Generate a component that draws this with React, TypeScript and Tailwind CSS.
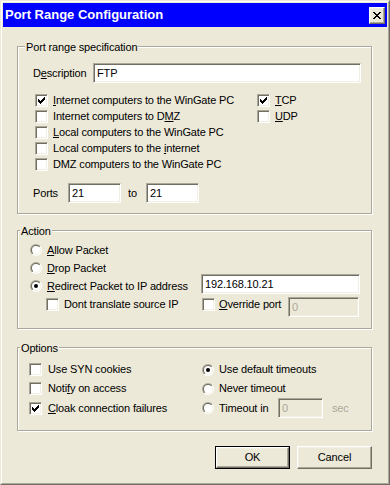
import { useId, type ReactNode } from 'react';

const sunken =
  'border border-t-[#ACA899] border-l-[#ACA899] border-b-white border-r-white shadow-[inset_1px_1px_0_#716F64,inset_-1px_-1px_0_#F1EFE2]';
const raised =
  'border border-t-white border-l-white border-r-[#716F64] border-b-[#716F64] shadow-[inset_-1px_-1px_0_#ACA899,inset_1px_1px_0_#F1EFE2]';

function Check({ checked }: { checked?: boolean }) {
  // classic 7x7 tick
  const cols = [2, 3, 4, 3, 2, 1, 0];
  return (
    <div className={`w-[13px] h-[13px] shrink-0 bg-white flex items-center justify-center ${sunken}`}>
      {checked && (
        <svg width="7" height="7" viewBox="0 0 7 7" shapeRendering="crispEdges">
          {cols.map((y, x) => (
            <rect key={x} x={x} y={y} width="1" height="3" fill="#000" />
          ))}
        </svg>
      )}
    </div>
  );
}

function Radio({ checked }: { checked?: boolean }) {
  const id = useId();
  return (
    <svg width="12" height="12" viewBox="0 0 12 12" className="shrink-0">
      <defs>
        <linearGradient id={`${id}o`} x1="0" y1="0" x2="1" y2="1">
          <stop offset="0.5" stopColor="#ACA899" />
          <stop offset="0.5" stopColor="#fff" />
        </linearGradient>
        <linearGradient id={`${id}i`} x1="0" y1="0" x2="1" y2="1">
          <stop offset="0.5" stopColor="#716F64" />
          <stop offset="0.5" stopColor="#F1EFE2" />
        </linearGradient>
      </defs>
      <circle cx="6" cy="6" r="6" fill={`url(#${id}o)`} />
      <circle cx="6" cy="6" r="5" fill={`url(#${id}i)`} />
      <circle cx="6" cy="6" r="4" fill="#fff" />
      {checked && <circle cx="6" cy="6" r="2" fill="#000" />}
    </svg>
  );
}

function Input({ value, w, disabled }: { value: string; w: string; disabled?: boolean }) {
  return (
    <div
      className={`h-[20px] pl-[3px] flex items-center leading-[13px] ${w} ${sunken} ${
        disabled ? 'bg-[#ECE9D8] text-[#ACA899]' : 'bg-white'
      }`}
    >
      {value}
    </div>
  );
}

function Group({
  label,
  labelPos,
  className,
  children,
}: {
  label: string;
  labelPos: string;
  className: string;
  children: ReactNode;
}) {
  return (
    <div
      className={`relative ml-[14px] w-[355px] border border-[#ACA899] shadow-[1px_1px_0_#fff,inset_1px_1px_0_#fff] ${className}`}
    >
      <span className={`absolute -top-[6px] px-[1px] bg-[#ECE9D8] leading-[13px] ${labelPos}`}>{label}</span>
      {children}
    </div>
  );
}

function CheckRow({ checked, children, gap = 'ml-[5px]' }: { checked?: boolean; children: ReactNode; gap?: string }) {
  return (
    <div className="flex items-center">
      <Check checked={checked} />
      <span className={`${gap} leading-[13px] whitespace-nowrap`}>{children}</span>
    </div>
  );
}

function RadioRow({ checked, children }: { checked?: boolean; children: ReactNode }) {
  return (
    <div className="flex items-center">
      <Radio checked={checked} />
      <span className="ml-[5px] leading-[13px] whitespace-nowrap">{children}</span>
    </div>
  );
}

export default function App() {
  return (
    <div className="w-[390px] h-[485px] bg-[#ECE9D8] text-[11px] tracking-[-0.15px] text-black font-['Liberation_Sans',Arial,sans-serif]">
      <div className="w-[390px] h-[485px] border border-t-[#ECE9D8] border-l-[#ECE9D8] border-r-[#716F64] border-b-[#716F64]">
        <div className="h-full border border-t-white border-l-white border-r-[#ACA899] border-b-[#ACA899] p-[1px]">
          {/* Title bar */}
          <div className="h-[24px] bg-[#0000FF] flex items-center justify-between pl-[2px] pr-[2px]">
            <span className="text-white font-bold text-[13px] tracking-normal leading-[24px]">
              Port Range Configuration
            </span>
            <div className={`w-[16px] h-[17px] bg-[#ECE9D8] flex items-center justify-center ${raised}`}>
              <svg width="8" height="7" viewBox="0 0 8 7" shapeRendering="crispEdges">
                <path
                  d="M0 0h2v1H0zM6 0h2v1H6zM1 1h2v1H1zM5 1h2v1H5zM2 2h4v1H2zM3 3h2v1H3zM2 4h4v1H2zM1 5h2v1H1zM5 5h2v1H5zM0 6h2v1H0zM6 6h2v1H6z"
                  fill="#000"
                />
              </svg>
            </div>
          </div>

          {/* Port range specification */}
          <Group label="Port range specification" labelPos="left-[7px]" className="mt-[19px] h-[168px]">
            <div className="flex items-center mt-[16px] ml-[15px]">
              <span className="w-[60px] leading-[13px]">
                D<u>e</u>scription
              </span>
              <Input value="FTP" w="w-[268px]" />
            </div>
            <div className="flex mt-[11px] ml-[17px]">
              <div className="w-[222px] flex flex-col">
                <div className="h-[16px]">
                  <CheckRow checked>
                    <u>I</u>nternet computers to the WinGate PC
                  </CheckRow>
                </div>
                <div className="h-[16px]">
                  <CheckRow>
                    Internet computers to D<u>M</u>Z
                  </CheckRow>
                </div>
                <div className="h-[16px]">
                  <CheckRow>
                    <u>L</u>ocal computers to the WinGate PC
                  </CheckRow>
                </div>
                <div className="h-[16px]">
                  <CheckRow>
                    Local computers to the <u>i</u>nternet
                  </CheckRow>
                </div>
                <div className="h-[16px]">
                  <CheckRow>DMZ computers to the WinGate PC</CheckRow>
                </div>
              </div>
              <div className="flex flex-col">
                <div className="h-[16px]">
                  <CheckRow checked>
                    <u>T</u>CP
                  </CheckRow>
                </div>
                <div className="h-[16px]">
                  <CheckRow>
                    <u>U</u>DP
                  </CheckRow>
                </div>
              </div>
            </div>
            <div className="flex items-center mt-[9px] ml-[15px]">
              <span className="w-[35px] leading-[13px]">Ports</span>
              <Input value="21" w="w-[53px]" />
              <span className="ml-[7px] w-[18px] leading-[13px]">to</span>
              <Input value="21" w="w-[53px]" />
            </div>
          </Group>

          {/* Action */}
          <Group label="Action" labelPos="left-[2px]" className="mt-[16px] h-[99px]">
            <div className="pt-[10px] pl-[12px] flex flex-col">
              <div className="h-[18px] flex items-center">
                <RadioRow>
                  <u>A</u>llow Packet
                </RadioRow>
              </div>
              <div className="h-[18px] flex items-center">
                <RadioRow>
                  <u>D</u>rop Packet
                </RadioRow>
              </div>
              <div className="h-[18px] flex items-start">
                <div className="w-[171px] h-[18px] flex items-center">
                  <RadioRow checked>
                    <u>R</u>edirect Packet to IP address
                  </RadioRow>
                </div>
                <div className="-mt-[3px]">
                  <Input value="192.168.10.21" w="w-[159px]" />
                </div>
              </div>
              <div className="mt-[2px] h-[20px] flex items-start">
                <div className="ml-[16px] w-[156px] mt-[1px]">
                  <CheckRow>Dont translate source IP</CheckRow>
                </div>
                <div className="w-[86px] mt-[1px]">
                  <CheckRow gap="ml-[4px]">
                    <u>O</u>verride port
                  </CheckRow>
                </div>
                <Input value="0" w="w-[71px]" disabled />
              </div>
            </div>
          </Group>

          {/* Options */}
          <Group label="Options" labelPos="left-[2px]" className="mt-[18px] h-[84px]">
            <div className="pt-[12px] pl-[11px] flex">
              <div className="w-[173px] flex flex-col">
                <div className="h-[19px] flex items-center">
                  <CheckRow gap="ml-[6px]">Use SYN cookies</CheckRow>
                </div>
                <div className="h-[19px] flex items-center">
                  <CheckRow gap="ml-[6px]">
                    Noti<u>f</u>y on access
                  </CheckRow>
                </div>
                <div className="h-[20px] flex items-center">
                  <CheckRow checked gap="ml-[6px]">
                    <u>C</u>loak connection failures
                  </CheckRow>
                </div>
              </div>
              <div className="flex flex-col">
                <div className="h-[19px] flex items-center">
                  <RadioRow checked>Use default timeouts</RadioRow>
                </div>
                <div className="h-[19px] flex items-center">
                  <RadioRow>Never timeout</RadioRow>
                </div>
                <div className="h-[20px] flex items-center">
                  <div className="w-[76px]">
                    <RadioRow>Timeout in</RadioRow>
                  </div>
                  <Input value="0" w="w-[45px]" disabled />
                  <span className="ml-[9px] leading-[13px] text-[#ACA899]">sec</span>
                </div>
              </div>
            </div>
          </Group>

          {/* Buttons */}
          <div className="mt-[15px] ml-[14px] w-[355px] flex justify-end gap-[7px]">
            <div className="w-[75px] h-[23px] border border-black">
              <div className={`h-full flex items-center justify-center leading-[13px] ${raised}`}>OK</div>
            </div>
            <div className={`w-[75px] h-[23px] flex items-center justify-center leading-[13px] ${raised}`}>
              Cancel
            </div>
          </div>
        </div>
      </div>
    </div>
  );
}
